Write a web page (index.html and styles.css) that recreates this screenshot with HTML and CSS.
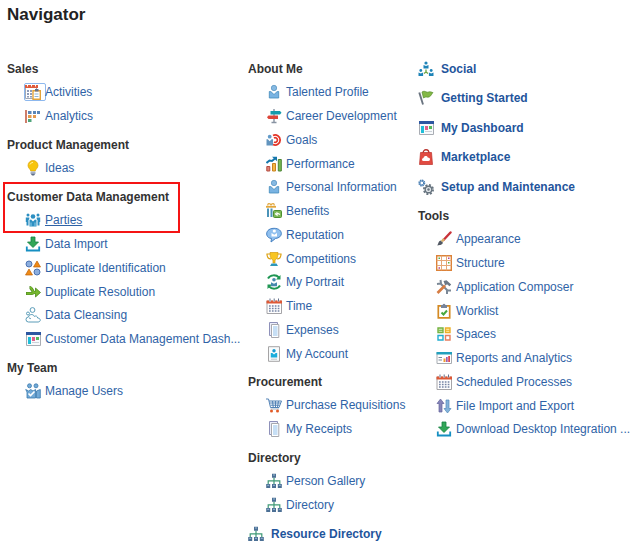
FILE: index.html
```html
<!DOCTYPE html>
<html lang="en">
<head>
    <meta charset="UTF-8">
    <meta name="viewport" content="width=device-width, initial-scale=1.0">
    <title>Navigator</title>
    <link rel="stylesheet" href="styles.css">
</head>
<body>
    <!-- Icon set -->
    <svg class="sprite" aria-hidden="true">
        <symbol id="activities" viewBox="0 0 16 16">
            <path d="M.5 2.500h11v12H.5z" fill="#fff" stroke="#a3a9b5"/>
            <path d="M0 1h13v3H0z" fill="#df5b3c"/>
            <path d="M2.500 0v2.500M6.500 0v2.500M10.500 0v2.500" stroke="#fff"/>
            <path d="M2 6h2v2H2zm3 0h2v2H5zM2 9h2v2H2zm3 0h2v2H5zm-3 3h2v1.500H2zm3 0h2v1.500H5z" fill="#8e9bb8"/>
            <path d="M8 6.700h7.300v8.600H8z" fill="#fff" stroke="#e2a33a" stroke-width="1.400"/>
            <path d="M10 5h3.500v2.500H10z" fill="#65718b"/>
            <path d="M9.500 10h4M9.500 12.500h4" stroke="#8eb6d8"/>
        </symbol>
        <symbol id="analytics" viewBox="0 0 16 16">
            <path d="M.3 2h1.400v13H.3z" fill="#b9462b"/>
            <path d="M3 3h3.500v3H3zm5 0h3v3H8zm4 0h3v3h-3z" fill="#5b86b7"/>
            <path d="M3 7h3.500v3H3zm5 0h3v3H8z" fill="#e5994c"/>
            <path d="M3 11h3.500v3H3z" fill="#4fa57b"/>
        </symbol>
        <symbol id="bulb" viewBox="0 0 16 16">
            <path d="M8 .5a5 5 0 0 0-5 5c0 2.500 2.300 3.500 2.800 5.500h4.400c.5-2 2.800-3 2.800-5.500a5 5 0 0 0-5-5z" fill="#f7c50c" stroke="#dca60b" stroke-width=".7"/>
            <path d="M5 4.500Q6 2.300 8 2.300" fill="none" stroke="#fff0a0"/>
            <path d="M5.500 11.500h5v2h-5z" fill="#a3b0c7"/>
            <path d="M5.500 13.500h5L9 15.500H7z" fill="#60708c"/>
        </symbol>
        <symbol id="parties" viewBox="0 0 16 16">
            <g fill="#2c8fc2">
                <circle cx="8" cy="4.500" r="2.300"/>
                <circle cx="3" cy="3" r="1.500"/>
                <circle cx="13" cy="3" r="1.500"/>
                <path d="M4.500 8L6 7.500l2 2 2-2 1.500.5v6.500h-7z"/>
                <path d="M.8 5.500h3.500v1.700l-.8.800v5.500H1.500V10H.8zM15.200 5.500h-3.500v1.700l.8.800v5.500h2V10h.7z"/>
            </g>
            <path d="M6 10.500v4M10 10.500v4" stroke="#a2daf0" stroke-width=".8"/>
        </symbol>
        <symbol id="download" viewBox="0 0 16 16">
            <path d="M6 1h4v5h3.500L8 11.500 2.500 6H6z" fill="#31a657" stroke="#158142" stroke-width=".8"/>
            <path d="M1.800 10.500v4h12.400v-4" fill="none" stroke="#168fc2" stroke-width="1.800"/>
        </symbol>
        <symbol id="shapes" viewBox="0 0 16 16">
            <circle cx="4" cy="4" r="3" fill="#8caede" stroke="#4c73b2"/>
            <circle cx="12" cy="12" r="3" fill="#8caede" stroke="#4c73b2"/>
            <path d="M12 1l3.500 6h-7zM4 9l3.500 6h-7z" fill="#ef8a16" stroke="#bf620a" stroke-width=".7"/>
        </symbol>
        <symbol id="merge" viewBox="0 0 16 16">
            <path d="M1 9.500h5.500c1.500 0 1.500-1 3-1H12M4.500 3.500c3 0 2.500 5 5 5" fill="none" stroke="#4c8921" stroke-width="3.200"/>
            <path d="M10.500 4l5 4.500-5 4.500z" fill="#77b82e" stroke="#4c8921" stroke-width=".8"/>
            <path d="M1.500 9.500h5c1.500 0 1.500-1 3-1H12M5 3.500c2.500 0 2 5 4.500 5" fill="none" stroke="#77b82e" stroke-width="1.800"/>
        </symbol>
        <symbol id="cleanse" viewBox="0 0 16 16">
            <path d="M3.500 15a2.500 2.500 0 0 1 0-5c.3-2.800 4.800-3.500 5.800-.6 1.700-1 3.300 0 3.300 1.600 3.600.2 3.400 4 .4 4z" fill="#fff" stroke="#5a9cb8"/>
            <path d="M4 11c1 0 1.500.5 2 1" fill="none" stroke="#5a9cb8"/>
            <circle cx="7.500" cy="3" r="2.400" fill="#fff" stroke="#5a9cb8"/>
            <circle cx="3" cy="6.500" r="1.500" fill="#fff" stroke="#5a9cb8"/>
        </symbol>
        <symbol id="dashboard" viewBox="0 0 16 16">
            <path d="M1.500 1.500h14v13h-14z" fill="#f8fafc" stroke="#a9adb4"/>
            <path d="M1 1h15v3H1z" fill="#2d57a1"/>
            <path d="M3 6h3v7H3z" fill="#20bed8"/>
            <path d="M7 6h3v4H7z" fill="#e06089"/>
            <path d="M11 6h3v3h-3z" fill="#55b95b"/>
            <path d="M7 11.500h7" stroke="#cbd1d8"/>
        </symbol>
        <symbol id="users" viewBox="0 0 16 16">
            <g fill="#72aad7" stroke="#3978ad" stroke-width=".8">
                <circle cx="4.500" cy="2.800" r="2"/>
                <circle cx="11" cy="2.800" r="2"/>
                <path d="M.7 6.500l3 1.500 2-1.500L8 8l2.500-1.500V15H2V9zM11.500 8l3.800-1.500V15h-3.800z"/>
            </g>
            <path d="M3.500 10.500l2 2 4-4" fill="none" stroke="#fff" stroke-width="1.600"/>
        </symbol>
        <symbol id="person" viewBox="0 0 16 16">
            <circle cx="8" cy="4" r="2.700" fill="#86b9e2" stroke="#508fbe" stroke-width=".7"/>
            <path d="M3.300 7.500l1.700.2 3 2.800 3-2.800 1.700-.2V14H3.300z" fill="#79b3e2" stroke="#438abb" stroke-width=".8"/>
        </symbol>
        <symbol id="signpost" viewBox="0 0 16 16">
            <path d="M8 1v14M5.500 14.500h5" stroke="#8893a2" stroke-width="1.400"/>
            <path d="M4.500 3h9.500L15.500 4.800 14 6.500H4.500z" fill="#159bac"/>
            <path d="M12 7.500H2.500L1 9.200 2.500 11H12z" fill="#dd4639"/>
        </symbol>
        <symbol id="goal" viewBox="0 0 16 16">
            <path d="M7 3.500a5 5 0 1 1 0 9" fill="none" stroke="#e33427" stroke-width="1.800"/>
            <path d="M8 6a2.300 2.300 0 1 1 0 4" fill="none" stroke="#e33427" stroke-width="1.700"/>
            <circle cx="3.700" cy="4.700" r="1.900" fill="#639bc9"/>
            <path d="M.5 7.300h1.300l1.900 1.900 1.900-1.900h1.400v6.200H.5z" fill="#6294be"/>
        </symbol>
        <symbol id="chart" viewBox="0 0 16 16">
            <path d="M.8 10.500h3V15h-3z" fill="#e28377" stroke="#b34c41"/>
            <path d="M6.500 7.500h3V15h-3z" fill="#f4b745" stroke="#c98220"/>
            <path d="M12.300 3.500h3V15h-3z" fill="#78b952" stroke="#4b8435"/>
            <path d="M.5 7L3.500 4.500 6 5l3-2.500" fill="none" stroke="#1577ac" stroke-width="2"/>
            <path d="M6 .7h5v4.500z" fill="#1577ac"/>
        </symbol>
        <symbol id="benefits" viewBox="0 0 16 16">
            <path d="M1 5.500h2V14H1zm3.500 0h2V14h-2z" fill="#4b93b8"/>
            <path d="M0 3.800h10" stroke="#e2a63b" stroke-width="1.800"/>
            <path d="M2 2.500C1 0 4.500 0 5 2.500 5.500 0 9 0 8 2.500" fill="none" stroke="#e2a63b" stroke-width="1.200"/>
            <rect x="7.500" y="7.500" width="8" height="7" rx="1" fill="#7cb855" stroke="#4c8f30"/>
            <path d="M9 10.500l2 1.500v-2l3 1.500" fill="none" stroke="#fff" stroke-width="1.300"/>
        </symbol>
        <symbol id="reputation" viewBox="0 0 16 16">
            <path d="M8 1.300c-9.300 0-9.300 9.800-2.500 10.200L5 15l4.500-3.500C18 10.500 17 1.300 8 1.300z" fill="#90c0ef" stroke="#4681c2"/>
            <circle cx="8.300" cy="4" r="1.600" fill="#fff"/>
            <path d="M5.500 6l2.800 1.700L11 6v3.500H5.500z" fill="#fff"/>
        </symbol>
        <symbol id="trophy" viewBox="0 0 16 16">
            <path d="M4 3H1c0 3 1.500 5 4 5M12 3h3c0 3-1.500 5-4 5" fill="none" stroke="#dda110" stroke-width="1.200"/>
            <path d="M4 1.500h8c0 4.500-.8 6.500-3 7.500v3H7V9C4.800 8 4 6 4 1.500z" fill="#f8c521" stroke="#d39a0c" stroke-width=".7"/>
            <path d="M5.500 12.500h5L12 15H4z" fill="#2e98b9"/>
        </symbol>
        <symbol id="portrait" viewBox="0 0 16 16">
            <path d="M2 4.500C4.500.5 10 .5 13 3.500M14 11.500c-2.500 4-8 4-11 1" fill="none" stroke="#1f9653" stroke-width="2"/>
            <path d="M14.500 1v4.500H10zM1.500 15v-4.500H6z" fill="#1f9653"/>
            <circle cx="8" cy="5.700" r="1.800" fill="#4789ad"/>
            <path d="M5 8.300l3 1.500 3-1.500v4H5z" fill="#4789ad"/>
        </symbol>
        <symbol id="calendar" viewBox="0 0 16 16">
            <path d="M1 3h14.500v12.500H1z" fill="#fff" stroke="#a5a4a8"/>
            <path d="M.5 2.500h15.500v3H.5z" fill="#de5936"/>
            <path d="M4 .5v3M8.200.5v3M12.500.5v3" stroke="#fff" stroke-width="2"/>
            <path d="M4 .5v3M8.200.5v3M12.500.5v3" stroke="#64718c"/>
            <path d="M3 8h11M3 10.500h11M3 13h11" stroke="#7785a5" stroke-width="1.600" stroke-dasharray="1.700 1.200"/>
        </symbol>
        <symbol id="pages" viewBox="0 0 16 16">
            <path d="M3.500.5h8v13h-8z" fill="#ecedfa" stroke="#8e91ba"/>
            <path d="M5.500 2.500h7.300v13H5.500z" fill="#fff" stroke="#a7a9af"/>
            <path d="M7 5h4.500M7 7h4.500M7 9h4.500M7 11h4.500M7 13h4.500" stroke="#8fc0ec" stroke-width="1.200"/>
        </symbol>
        <symbol id="account" viewBox="0 0 16 16">
            <path d="M2.500.7h11v14.600h-11z" fill="#f8fbfc" stroke="#a5a4a5"/>
            <circle cx="8" cy="4.800" r="1.700" fill="#179ad0"/>
            <path d="M4.800 7h1.500L8 8.500 9.700 7h1.500v4.500H4.800z" fill="#19addc"/>
            <path d="M5 13.200h6" stroke="#bbc5cb"/>
        </symbol>
        <symbol id="cart" viewBox="0 0 16 16">
            <path d="M0 2h2.500l2 8.500H13L15.500 4H3M4 6h10.500M4.500 8.200h9M6.500 4l.7 6M9.500 4v6M12.500 4l-1 6" fill="none" stroke="#5282b6"/>
            <path d="M4.500 12h8.500" stroke="#a3b3c5"/>
            <circle cx="5.500" cy="14" r="1.500" fill="#e25b27"/>
            <circle cx="11.500" cy="14" r="1.500" fill="#e25b27"/>
        </symbol>
        <symbol id="orgchart" viewBox="0 0 16 16">
            <path d="M8 4.500V11M2.200 11V7.800h11.600V11" fill="none" stroke="#3f9a76" stroke-width="1.200"/>
            <path d="M6 .8h4v4H6zM.2 11h4v4h-4zM6 11h4v4H6zM11.800 11h4v4h-4z" fill="#4c7095"/>
            <path d="M7 2h2M1.200 12.300h2M7 12.300h2M12.800 12.300h2" stroke="#9abbd6"/>
        </symbol>
        <symbol id="social" viewBox="0 0 16 16">
            <path d="M8 8.500V11l-2 1.500M8 11l2 1.500" fill="none" stroke="#6fa442" stroke-width="1.300"/>
            <g fill="#1e84b8">
                <circle cx="8" cy="2" r="1.600"/>
                <path d="M5.500 4l2.500 1 2.500-1v3.500h-5z"/>
                <circle cx="2.800" cy="9.500" r="1.400"/>
                <path d="M.5 11.500l2.300 1 2.300-1V15H.5z"/>
                <circle cx="13.200" cy="9.500" r="1.400"/>
                <path d="M10.900 11.500l2.300 1 2.300-1V15h-4.600z"/>
            </g>
        </symbol>
        <symbol id="flag" viewBox="0 0 16 16">
            <path d="M4 2c3-2 4.500 1 6.500 0 1.500-.5 3 0 4.500.7-1.500 1-1.500 3-3.500 4C9 8 8 6 5.500 8z" fill="#83b847" stroke="#558d2c" stroke-width=".7"/>
            <path d="M1.300 2.500L5 14.500" stroke="#6a7480" stroke-width="1.900"/>
        </symbol>
        <symbol id="bag" viewBox="0 0 16 16">
            <path d="M5 4.500C5-.5 11-.5 11 4.500" fill="none" stroke="#b9332e" stroke-width="1.300"/>
            <path d="M2.500 3.500h11l1 12h-13z" fill="#e14b42" stroke="#bd302b" stroke-width=".7"/>
            <path d="M5.500 12a1.500 1.500 0 0 1 0-3c.5-2.500 3.700-2.500 4.200-.5 3 0 2.800 3.500.8 3.500z" fill="#fff"/>
        </symbol>
        <symbol id="gears" viewBox="0 0 16 16">
            <circle cx="3.800" cy="4" r="2.700" fill="none" stroke="#4d82b6" stroke-width="1.600" stroke-dasharray="1.500 .6"/>
            <circle cx="3.800" cy="4" r="1.900" fill="#fff" stroke="#4d82b6"/>
            <circle cx="10.500" cy="10.500" r="4.600" fill="none" stroke="#687580" stroke-width="1.800" stroke-dasharray="2 1.600"/>
            <circle cx="10.500" cy="10.500" r="3.300" fill="#dfe4e8" stroke="#687580" stroke-width="1.400"/>
            <circle cx="10.500" cy="10.500" r="1.200" fill="#687580"/>
        </symbol>
        <symbol id="brush" viewBox="0 0 16 16">
            <path d="M14.500 1.500L7.500 9" stroke="#c9333a" stroke-width="2.400" stroke-linecap="round"/>
            <path d="M8 8L5.800 10.500" stroke="#d8b16b" stroke-width="2.500"/>
            <path d="M4.500 9.500l2.500 2.300c-1 2.500-3.500 2.400-6 2.700 1.500-1 1-4 3.500-5z" fill="#525963"/>
        </symbol>
        <symbol id="structure" viewBox="0 0 16 16">
            <path d="M.7.7h14.600v14.600H.7z" fill="#fff" stroke="#dc8238" stroke-width="1.400"/>
            <path d="M5.500.7v14.600M10.500.7v14.600M.7 5.500h14.600M.7 10.500h14.600" stroke="#e6a878"/>
            <path d="M2.500 2.500H4V4H2.500zM12 7h1.500v1.500H12z" fill="#58ad4b"/>
            <path d="M12 2.500h1.500V4H12zM2.500 12.200H4v1.500H2.500z" fill="#b4448c"/>
        </symbol>
        <symbol id="tools" viewBox="0 0 16 16">
            <path d="M4 4l8 8M4.500 1l.5 3.500-4 .5M11 15v-3.500h4" fill="none" stroke="#7b8896" stroke-width="2"/>
            <path d="M7.500 2l3-.8 4.700 4.300-1.700 1.700-2.500-2-1.700 1.600z" fill="#6b7887"/>
            <path d="M9 6.500l-7.500 7.500" stroke="#d67d43" stroke-width="2.600"/>
        </symbol>
        <symbol id="worklist" viewBox="0 0 16 16">
            <path d="M2.300 2.800h11.400v12H2.300z" fill="#fff" stroke="#d48a24" stroke-width="1.700"/>
            <path d="M5 2h1.500Q8-.3 9.500 2H11v3H5z" fill="#77849a"/>
            <path d="M5.500 9.500l2 2L11 7.500" fill="none" stroke="#49a83d" stroke-width="2"/>
        </symbol>
        <symbol id="spaces" viewBox="0 0 16 16">
            <path d="M2 2h5v4.500H2z" fill="#d8edc4" stroke="#75b340" stroke-width="1.400"/>
            <path d="M9.500 2H14v4.500H9.500z" fill="#fff0b4" stroke="#edaf27" stroke-width="1.400"/>
            <path d="M2 9.500h5V14H2z" fill="#fff" stroke="#22add0" stroke-width="1.400"/>
            <path d="M9.500 9.500H14V14H9.500z" fill="#fff" stroke="#e57e5f" stroke-width="1.400"/>
            <path d="M2.500 4.300H7" stroke="#75b340"/>
            <path d="M9.500 4.300H14" stroke="#edaf27"/>
        </symbol>
        <symbol id="reports" viewBox="0 0 16 16">
            <path d="M1 2.500h14.500v11H1z" fill="#fff" stroke="#a7acb2"/>
            <path d="M.5 2h15.500v2.500H.5z" fill="#23a0bd"/>
            <path d="M2.500 7.500H6M2.500 10H6" stroke="#7e8b9a"/>
            <path d="M7.500 8.500h2V12h-2z" fill="#ef9b35"/>
            <path d="M10 7h1.700v5H10z" fill="#9c5eb1"/>
            <path d="M12.200 6H14v6h-1.800z" fill="#df484d"/>
        </symbol>
        <symbol id="transfer" viewBox="0 0 16 16">
            <path d="M4.500 1L8 5.500H6V14H3V5.500H1z" fill="#8685b8" stroke="#62629b" stroke-width=".7"/>
            <path d="M11.500 15L15 10.500h-2V2h-3v8.500H8z" fill="#84b3da" stroke="#5088b9" stroke-width=".7"/>
        </symbol>
    </svg>

    <main class="navigator">
        <h1>Navigator</h1>

        <div class="columns">
            <!-- Left column -->
            <div class="column">
                <section class="group">
                    <h2>Sales</h2>
                    <ul class="links">
                        <li><a href="#" class="focused"><svg class="icon"><use href="#activities"/></svg>Activities</a></li>
                        <li><a href="#"><svg class="icon"><use href="#analytics"/></svg>Analytics</a></li>
                    </ul>
                </section>
                <section class="group">
                    <h2>Product Management</h2>
                    <ul class="links">
                        <li><a href="#"><svg class="icon"><use href="#bulb"/></svg>Ideas</a></li>
                    </ul>
                </section>
                <section class="group highlight">
                    <h2>Customer Data Management</h2>
                    <ul class="links">
                        <li><a href="#" class="current"><svg class="icon"><use href="#parties"/></svg>Parties</a></li>
                        <li><a href="#"><svg class="icon"><use href="#download"/></svg>Data Import</a></li>
                        <li><a href="#"><svg class="icon"><use href="#shapes"/></svg>Duplicate Identification</a></li>
                        <li><a href="#"><svg class="icon"><use href="#merge"/></svg>Duplicate Resolution</a></li>
                        <li><a href="#"><svg class="icon"><use href="#cleanse"/></svg>Data Cleansing</a></li>
                        <li><a href="#"><svg class="icon"><use href="#dashboard"/></svg>Customer Data Management Dash...</a></li>
                    </ul>
                </section>
                <section class="group">
                    <h2>My Team</h2>
                    <ul class="links">
                        <li><a href="#"><svg class="icon"><use href="#users"/></svg>Manage Users</a></li>
                    </ul>
                </section>
            </div>

            <!-- Middle column -->
            <div class="column">
                <section class="group">
                    <h2>About Me</h2>
                    <ul class="links">
                        <li><a href="#"><svg class="icon"><use href="#person"/></svg>Talented Profile</a></li>
                        <li><a href="#"><svg class="icon"><use href="#signpost"/></svg>Career Development</a></li>
                        <li><a href="#"><svg class="icon"><use href="#goal"/></svg>Goals</a></li>
                        <li><a href="#"><svg class="icon"><use href="#chart"/></svg>Performance</a></li>
                        <li><a href="#"><svg class="icon"><use href="#person"/></svg>Personal Information</a></li>
                        <li><a href="#"><svg class="icon"><use href="#benefits"/></svg>Benefits</a></li>
                        <li><a href="#"><svg class="icon"><use href="#reputation"/></svg>Reputation</a></li>
                        <li><a href="#"><svg class="icon"><use href="#trophy"/></svg>Competitions</a></li>
                        <li><a href="#"><svg class="icon"><use href="#portrait"/></svg>My Portrait</a></li>
                        <li><a href="#"><svg class="icon"><use href="#calendar"/></svg>Time</a></li>
                        <li><a href="#"><svg class="icon"><use href="#pages"/></svg>Expenses</a></li>
                        <li><a href="#"><svg class="icon"><use href="#account"/></svg>My Account</a></li>
                    </ul>
                </section>
                <section class="group">
                    <h2>Procurement</h2>
                    <ul class="links">
                        <li><a href="#"><svg class="icon"><use href="#cart"/></svg>Purchase Requisitions</a></li>
                        <li><a href="#"><svg class="icon"><use href="#pages"/></svg>My Receipts</a></li>
                    </ul>
                </section>
                <section class="group">
                    <h2>Directory</h2>
                    <ul class="links">
                        <li><a href="#"><svg class="icon"><use href="#orgchart"/></svg>Person Gallery</a></li>
                        <li><a href="#"><svg class="icon"><use href="#orgchart"/></svg>Directory</a></li>
                    </ul>
                </section>
                <ul class="top-links">
                    <li><a href="#"><svg class="icon"><use href="#orgchart"/></svg>Resource Directory</a></li>
                </ul>
            </div>

            <!-- Right column -->
            <div class="column">
                <ul class="top-links">
                    <li><a href="#"><svg class="icon"><use href="#social"/></svg>Social</a></li>
                    <li><a href="#"><svg class="icon"><use href="#flag"/></svg>Getting Started</a></li>
                    <li><a href="#"><svg class="icon"><use href="#dashboard"/></svg>My Dashboard</a></li>
                    <li><a href="#"><svg class="icon"><use href="#bag"/></svg>Marketplace</a></li>
                    <li><a href="#"><svg class="icon"><use href="#gears"/></svg>Setup and Maintenance</a></li>
                </ul>
                <section class="group">
                    <h2>Tools</h2>
                    <ul class="links">
                        <li><a href="#"><svg class="icon"><use href="#brush"/></svg>Appearance</a></li>
                        <li><a href="#"><svg class="icon"><use href="#structure"/></svg>Structure</a></li>
                        <li><a href="#"><svg class="icon"><use href="#tools"/></svg>Application Composer</a></li>
                        <li><a href="#"><svg class="icon"><use href="#worklist"/></svg>Worklist</a></li>
                        <li><a href="#"><svg class="icon"><use href="#spaces"/></svg>Spaces</a></li>
                        <li><a href="#"><svg class="icon"><use href="#reports"/></svg>Reports and Analytics</a></li>
                        <li><a href="#"><svg class="icon"><use href="#calendar"/></svg>Scheduled Processes</a></li>
                        <li><a href="#"><svg class="icon"><use href="#transfer"/></svg>File Import and Export</a></li>
                        <li><a href="#"><svg class="icon"><use href="#download"/></svg>Download Desktop Integration ...</a></li>
                    </ul>
                </section>
            </div>
        </div>
    </main>
</body>
</html>
```
FILE: styles.css
```css
body {
    margin: 0;
    background-color: #fff;
    color: #333;
    font-family: "Liberation Sans", Arial, sans-serif;
    font-size: 12px;
}
.sprite {
    display: none;
}
.navigator {
    padding: 4px 7px;
}
h1 {
    margin: 0 0 32px;
    color: #222;
    font-size: 17px;
    line-height: 22px;
}
.columns {
    display: grid;
    grid-template-columns: 241fr 170fr 209fr;
}
.column {
    min-width: 0;
}
.group {
    margin-bottom: 6px;
}
h2 {
    margin: 0;
    font-size: 12px;
    line-height: 22px;
}
ul {
    margin: 0;
    padding: 0;
    list-style: none;
}
a {
    display: flex;
    align-items: center;
    color: #2f63a6;
    text-decoration: none;
    white-space: nowrap;
}
a:hover,
.current {
    text-decoration: underline;
}
.icon {
    flex: none;
    width: 16px;
    height: 16px;
}
.links {
    padding-left: 18px;
}
.links a {
    gap: 4px;
    height: 24px;
}
.links li:nth-child(4n) a {
    height: 23px;
}
.links .focused {
    gap: 0;
}
.focused .icon {
    padding-right: 4px;
    outline: 1px solid #8db8ee;
    border-radius: 1px;
}
.top-links a {
    gap: 7px;
    height: 22px;
    margin-bottom: 7px;
    color: #1f559c;
    font-weight: bold;
}
.top-links li:nth-child(even) a {
    margin-bottom: 8px;
}

/* Red frame round the heading and its first link */
.highlight {
    position: relative;
}
.highlight::before {
    content: "";
    position: absolute;
    top: -4px;
    left: -4px;
    box-sizing: border-box;
    width: 177px;
    height: 51px;
    border: 2px solid #f51414;
    pointer-events: none;
}
```
